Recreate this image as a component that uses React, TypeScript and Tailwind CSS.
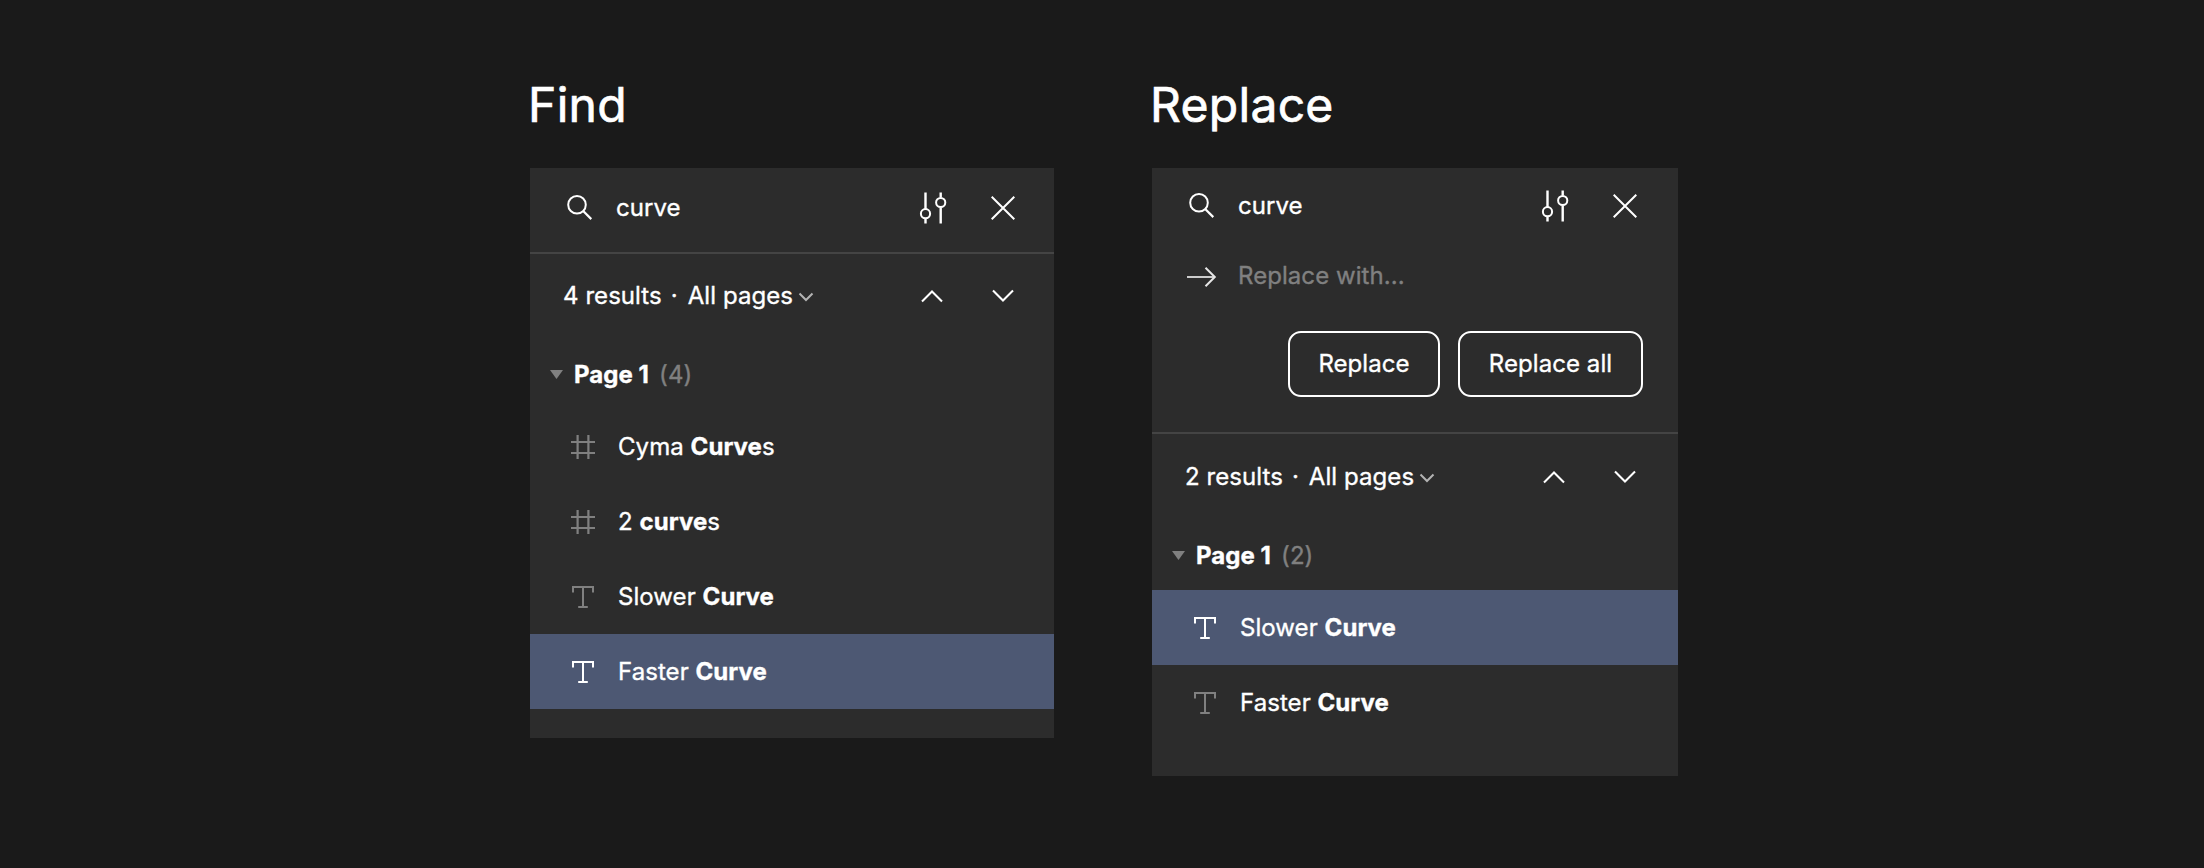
import React from "react";

function SearchIcon() {
  return (
    <svg className="h-7 w-7" viewBox="0 0 28 28" fill="none" stroke="white" strokeWidth="2">
      <circle cx="11" cy="10.8" r="8.8" />
      <path d="M17.2 17 L25.3 25.1" strokeWidth="2.2" />
    </svg>
  );
}

function SlidersIcon() {
  return (
    <svg className="h-8 w-8" viewBox="0 0 32 32" fill="none" stroke="white" strokeWidth="2">
      <path d="M8.5 0.5V17M8.5 26.8V31.5M23.7 0.5V5.5M23.7 15.5V31.5" strokeWidth="2.4" />
      <circle cx="8.5" cy="21.7" r="4.6" />
      <circle cx="23.7" cy="10.5" r="4.6" />
    </svg>
  );
}

function CloseIcon() {
  return (
    <svg className="h-6 w-6" viewBox="0 0 24 24" fill="none" stroke="white" strokeWidth="2">
      <path d="M0.7 0.7 L23.3 23.3 M23.3 0.7 L0.7 23.3" />
    </svg>
  );
}

function ChevronIcon({ up }: { up?: boolean }) {
  return (
    <svg className="h-[14px] w-6" viewBox="0 0 24 14" fill="none" stroke="white" strokeWidth="2.1">
      <path d={up ? "M2 12.5 L12 2.5 L22 12.5" : "M2 1.5 L12 11.5 L22 1.5"} />
    </svg>
  );
}

function SmallChevron() {
  return (
    <svg className="h-[10px] w-4" viewBox="0 0 16 10" fill="none" stroke="#b3b3b3" strokeWidth="2">
      <path d="M1.5 1.5 L8 8 L14.5 1.5" />
    </svg>
  );
}

function ArrowIcon() {
  return (
    <svg className="h-5 w-[30px]" viewBox="0 0 30 20" fill="none" strokeWidth="2">
      <path d="M0 10H28" stroke="#cccccc" />
      <path d="M18.5 0.8 L27.8 10 L18.5 19.2" stroke="#e6e6e6" />
    </svg>
  );
}

function FrameIcon() {
  return (
    <svg className="h-6 w-6" viewBox="0 0 24 24" fill="none" stroke="#808080" strokeWidth="2.2">
      <path d="M6.6 0V24M17.4 0V24M0 7H24M0 18H24" />
    </svg>
  );
}

function TextIcon({ active }: { active: boolean }) {
  return (
    <svg className="h-[22px] w-6" viewBox="0 0 24 22" fill="none" stroke={active ? "#ffffff" : "#808080"} strokeWidth="2">
      <path d="M2 6.5V1H22V6.5M12 1V21M7.2 21H16.8" />
    </svg>
  );
}

type Result = { kind: "frame" | "text"; before: string; match: string; after?: string; selected?: boolean };

function SearchRow({ className }: { className: string }) {
  return (
    <div className={`flex items-center pl-9 ${className}`}>
      <SearchIcon />
      <span className="ml-[22px] flex-1">curve</span>
      <SlidersIcon />
      <div className="ml-[42px]">
        <CloseIcon />
      </div>
    </div>
  );
}

function Results({
  count,
  items,
  summaryClass,
  pageClass,
}: {
  count: number;
  items: Result[];
  summaryClass: string;
  pageClass: string;
}) {
  return (
    <>
      <div className={`flex h-[84px] items-center pl-[33px] ${summaryClass}`}>
        <span>{count} results</span>
        <span className="ml-[9px]">·</span>
        <span className="ml-[10px]">All pages</span>
        <div className="ml-[5px] mt-px">
          <SmallChevron />
        </div>
        <div className="flex-1" />
        <ChevronIcon up />
        <div className="ml-[47px]">
          <ChevronIcon />
        </div>
      </div>
      <div className={`flex items-center pl-5 ${pageClass}`}>
        <svg className="h-[9px] w-[13px]" viewBox="0 0 13 9">
          <path d="M0 0H13L6.5 9Z" fill="#808080" />
        </svg>
        <span className="ml-[11px] font-bold">Page 1</span>
        <span className="ml-[10px] text-[#808080]">({count})</span>
      </div>
      {items.map((r) => (
        <div
          key={r.before + r.match}
          className={`flex h-[75px] items-center pl-[41px] ${r.selected ? "bg-[#4d5873]" : ""}`}
        >
          {r.kind === "frame" ? <FrameIcon /> : <TextIcon active={!!r.selected} />}
          <span className="ml-[23px] whitespace-pre">
            {r.before}
            <b className="font-bold">{r.match}</b>
            {r.after}
          </span>
        </div>
      ))}
    </>
  );
}

export default function App() {
  return (
    <div
      className="flex h-[868px] w-[2204px] items-start bg-[#1a1a1a] pl-[530px] text-[24px] leading-[30px] tracking-[0.06px] text-white [-webkit-text-stroke:0.35px]"
      style={{ fontFamily: 'Inter, "Liberation Sans", sans-serif' }}
    >
      <section className="w-[524px]">
        <h1 className="-ml-[2px] flex h-[168px] items-start pt-[75px] text-[48px] leading-[60px] tracking-[0.3px] [-webkit-text-stroke:0.7px]">Find</h1>
        <div className="h-[570px] bg-[#2c2c2c]">
          <SearchRow className="h-[84px] pb-[5px] pr-[39px]" />
          <div className="h-[2px] bg-[#444444]" />
          <Results
            count={4}
            summaryClass="pr-[39px]"
            pageClass="h-[71px] pt-[2px]"
            items={[
              { kind: "frame", before: "Cyma ", match: "Curve", after: "s" },
              { kind: "frame", before: "2 ", match: "curve", after: "s" },
              { kind: "text", before: "Slower ", match: "Curve" },
              { kind: "text", before: "Faster ", match: "Curve", selected: true },
            ]}
          />
        </div>
      </section>
      <section className="ml-[98px] w-[526px]">
        <h1 className="-ml-[2px] flex h-[168px] items-start pt-[75px] text-[48px] leading-[60px] tracking-[0.3px] [-webkit-text-stroke:0.7px]">Replace</h1>
        <div className="h-[608px] bg-[#2c2c2c]">
          <SearchRow className="h-[75px] pr-[41px]" />
          <div className="flex h-[67px] items-center pl-[35px] text-[#808080]">
            <ArrowIcon />
            <span className="ml-[21px] pb-px">Replace with...</span>
          </div>
          <div className="mt-[21px] flex justify-end gap-[18px] pr-[35px]">
            <button className="h-[66px] w-[152px] rounded-[13px] border-2 border-white">Replace</button>
            <button className="h-[66px] w-[185px] rounded-[13px] border-2 border-white">Replace all</button>
          </div>
          <div className="mt-[35px] h-[2px] bg-[#444444]" />
          <Results
            count={2}
            summaryClass="pr-[41px] pt-[2px]"
            pageClass="h-[72px] pt-[3px]"
            items={[
              { kind: "text", before: "Slower ", match: "Curve", selected: true },
              { kind: "text", before: "Faster ", match: "Curve" },
            ]}
          />
        </div>
      </section>
    </div>
  );
}
